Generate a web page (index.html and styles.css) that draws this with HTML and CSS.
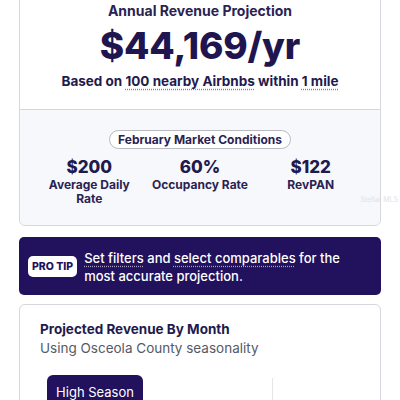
FILE: index.html
```html
<!DOCTYPE html>
<html>
<head>
<meta charset="utf-8">
<link rel="stylesheet" href="styles.css">
</head>
<body>
<div class="page">
  <section class="card summary">
    <div class="projection">
      <h2 class="proj-title">Annual Revenue Projection</h2>
      <div class="proj-value">$44,169/yr</div>
      <p class="proj-basis">Based on <span class="dotted">100 nearby Airbnbs</span> within <span class="dotted">1 mile</span></p>
    </div>
    <div class="market">
      <div class="pill">February Market Conditions</div>
      <div class="stats">
        <div class="stat"><div class="stat-value">$200</div><div class="stat-label">Average Daily Rate</div></div>
        <div class="stat"><div class="stat-value">60%</div><div class="stat-label">Occupancy Rate</div></div>
        <div class="stat"><div class="stat-value">$122</div><div class="stat-label">RevPAN</div></div>
      </div>
      <span class="watermark">Stellar MLS</span>
    </div>
  </section>

  <section class="tip">
    <span class="tip-badge">PRO TIP</span>
    <p class="tip-text"><span class="dotted light">Set filters</span> and <span class="dotted light">select comparables</span> for the most accurate projection.</p>
  </section>

  <section class="card monthly">
    <h3 class="monthly-title">Projected Revenue By Month</h3>
    <p class="monthly-sub">Using Osceola County seasonality</p>
    <div class="chart">
      <button class="season-btn">High Season</button>
      <span class="gridline"></span>
    </div>
  </section>
</div>
</body>
</html>
```

FILE: styles.css
```css
* { box-sizing: border-box; }
html, body { margin: 0; padding: 0; background: #ffffff; }
body {
  font-family: Inter, "Noto Sans", "Liberation Sans", sans-serif;
  color: #221a4e;
  overflow: hidden;
}
.page {
  padding: 0 19px;
  display: flex;
  flex-direction: column;
}
.card {
  border: 1px solid #d6d6dc;
  border-radius: 6px;
  background: #fff;
}
.summary {
  margin-top: -12px;
}
.projection {
  padding: 12px 10px 19px;
  display: flex;
  flex-direction: column;
  align-items: center;
  border-bottom: 1px solid #d6d6dc;
}
.proj-title {
  margin: 0;
  font-size: 14px;
  line-height: 20px;
  font-weight: 700;
  color: #2a2352;
}
.proj-value {
  margin-top: 5px;
  font-size: 37px;
  line-height: 40px;
  font-weight: 800;
  letter-spacing: -0.2px;
  color: #1f1650;
}
.proj-basis {
  margin: 6px 0 0;
  font-size: 13.5px;
  line-height: 18px;
  font-weight: 700;
  color: #221a4e;
}
.dotted {
  text-decoration: underline dotted;
  text-decoration-color: rgba(34, 26, 78, 0.55);
  text-underline-offset: 3px;
}
.dotted.light { text-decoration-color: rgba(255, 255, 255, 0.6); }
.market {
  position: relative;
  background: #f7f8fb;
  padding: 20px 14px 19px;
  display: flex;
  flex-direction: column;
  align-items: center;
  border-radius: 0 0 6px 6px;
}
.pill {
  border: 1px solid #b9b9c2;
  border-radius: 999px;
  padding: 0 8px;
  height: 19px;
  line-height: 17px;
  font-size: 12px;
  font-weight: 700;
  color: #2a2352;
  background: #fff;
}
.stats {
  margin-top: 7px;
  width: 100%;
  display: grid;
  grid-template-columns: repeat(3, 1fr);
}
.stat {
  display: flex;
  flex-direction: column;
  align-items: center;
  text-align: center;
}
.stat-value {
  font-size: 17px;
  line-height: 22px;
  font-weight: 800;
  color: #221a4e;
}
.stat-label {
  font-size: 12px;
  line-height: 14px;
  font-weight: 700;
  color: #2a2352;
  max-width: 90px;
}
.stat:nth-child(2) .stat-label { max-width: 110px; }
.watermark {
  position: absolute;
  right: -18px;
  top: 85px;
  font-size: 7px;
  color: #e2e2e6;
  white-space: nowrap;
}
.tip {
  margin-top: 11px;
  height: 58px;
  background: #22115c;
  border-radius: 5px;
  display: flex;
  align-items: center;
  gap: 7px;
  padding: 0 10px 0 9px;
}
.tip-badge {
  flex: none;
  background: #fff;
  color: #22115c;
  font-size: 10.5px;
  font-weight: 800;
  line-height: 21px;
  padding: 0 4px;
  border-radius: 5px;
}
.tip-text {
  margin: 2px 0 0;
  color: #ffffff;
  font-size: 13px;
  line-height: 18px;
  font-weight: 500;
}
.monthly {
  margin-top: 9px;
  padding: 15px 20px 0;
  height: 120px;
}
.monthly-title {
  margin: 0;
  font-size: 13.5px;
  line-height: 18px;
  font-weight: 700;
  color: #221a4e;
}
.monthly-sub {
  margin: 1px 0 0;
  font-size: 13.5px;
  line-height: 18px;
  font-weight: 400;
  color: #555a66;
}
.chart {
  position: relative;
  margin-top: 18px;
  padding-left: 7px;
}
.season-btn {
  font-family: inherit;
  border: none;
  background: #22115c;
  color: #fff;
  font-size: 13px;
  font-weight: 400;
  height: 34px;
  width: 96px;
  border-radius: 6px;
  padding: 0;
}
.gridline {
  position: absolute;
  left: 232px;
  top: 3px;
  width: 1px;
  height: 60px;
  background: #e6e6ea;
}
```
